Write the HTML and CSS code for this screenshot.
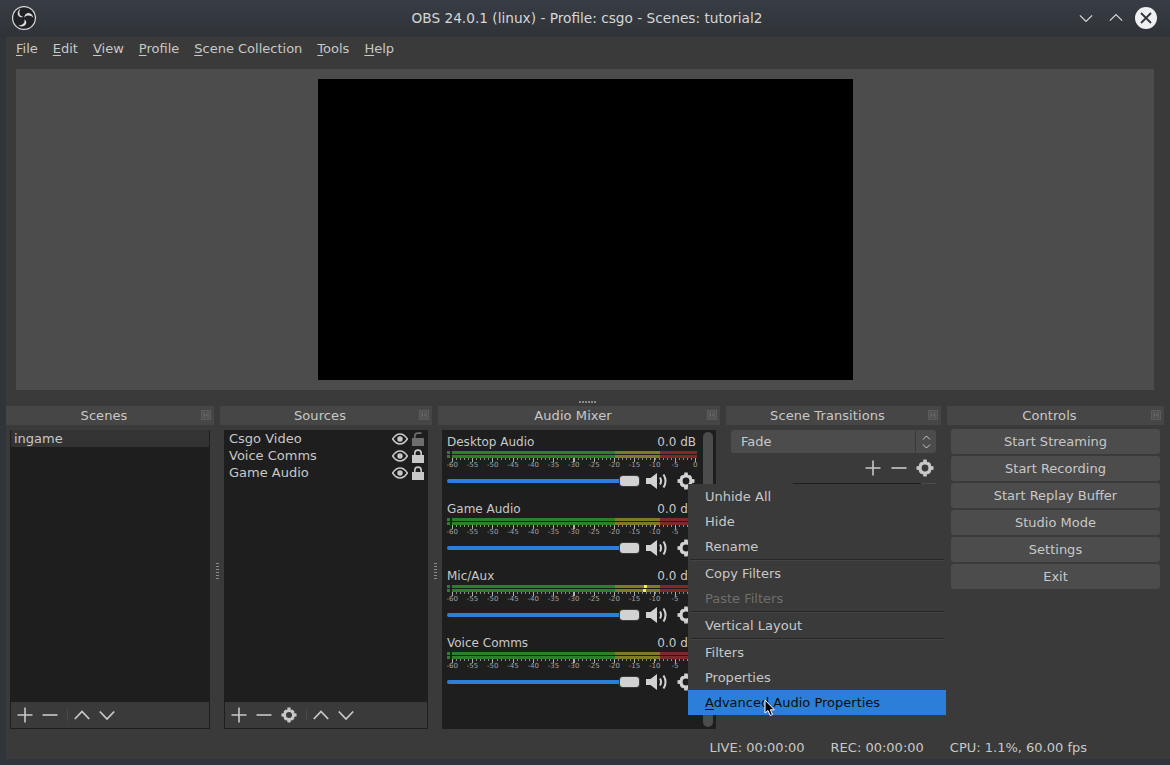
FILE: index.html
```html
<!DOCTYPE html>
<html lang="en">
<head>
  <meta charset="UTF-8" />
  <title>OBS 24.0.1 (linux) - Profile: csgo - Scenes: tutorial2</title>
  <link rel="stylesheet" href="styles.css">
</head>
<body>

  <svg class="defs" width="0" height="0">
    <symbol id="i-plus" viewBox="0 0 16 16"><path d="M8 0.5V15.5M0.5 8H15.5" stroke="currentColor" stroke-width="1.6" fill="none"/></symbol>
    <symbol id="i-minus" viewBox="0 0 16 16"><path d="M0.5 8H15.5" stroke="currentColor" stroke-width="1.6" fill="none"/></symbol>
    <symbol id="i-up" viewBox="0 0 16 16"><path d="M0.8 12L8 4.5L15.2 12" stroke="currentColor" stroke-width="1.8" fill="none"/></symbol>
    <symbol id="i-down" viewBox="0 0 16 16"><path d="M0.8 4.5L8 12L15.2 4.5" stroke="currentColor" stroke-width="1.8" fill="none"/></symbol>
    <symbol id="i-gear" viewBox="0 0 18 18">
      <circle cx="9" cy="9" r="5" stroke="currentColor" stroke-width="3.2" fill="none"/>
      <path d="M7.3 0.5H10.7L11 3.5H7ZM7.3 17.5H10.7L11 14.5H7ZM0.5 7.3V10.7L3.5 11V7ZM17.5 7.3V10.7L14.5 11V7ZM2.8 5.2L5.2 2.8L7 5L5 7ZM15.2 5.2L12.8 2.8L11 5L13 7ZM2.8 12.8L5.2 15.2L7 13L5 11ZM15.2 12.8L12.8 15.2L11 13L13 11Z" fill="currentColor"/>
    </symbol>
    <symbol id="i-eye" viewBox="0 0 16 12"><path d="M0.6 6C3 2.4 5.4 1 8 1S13 2.4 15.4 6C13 9.6 10.6 11 8 11S3 9.6 0.6 6Z" fill="none" stroke="currentColor" stroke-width="1.6"/><circle cx="8" cy="6" r="2.7" fill="currentColor"/></symbol>
    <symbol id="i-lock" viewBox="0 0 12 14"><path d="M2.8 7V4.2C2.8 2.3 4.2 1.1 6 1.1S9.2 2.3 9.2 4.2V7" fill="none" stroke="currentColor" stroke-width="1.6"/><rect y="6" width="12" height="8" fill="currentColor"/></symbol>
    <symbol id="i-open" viewBox="0 0 12 14"><path d="M2.8 6V4C2.8 2.2 4.2 1.1 6 1.1H9.5" fill="none" stroke="currentColor" stroke-width="1.6"/><rect y="6" width="12" height="8" fill="currentColor"/></symbol>
    <symbol id="i-speaker" viewBox="0 0 22 16">
      <path d="M0 5H4.5L11 0V16L4.5 11H0Z" fill="currentColor"/>
      <path d="M14 4.5C15.2 6.5 15.2 9.500 14 11.500M17.500 1.500C20 5.500 20 10.500 17.500 14.500" fill="none" stroke="currentColor" stroke-width="2"/>
    </symbol>
    <symbol id="i-float" viewBox="0 0 10 10">
      <rect x="0.500" y="0.500" width="9" height="9" fill="#505050" stroke="#6e6e6e" stroke-dasharray="1 1"/>
      <path d="M3 2.500V7.500M7 2.500V7.500M3 5H7" stroke="#7c7c7c" stroke-dasharray="1 1" fill="none"/>
    </symbol>
  </svg>

  <header class="titlebar">
    <svg class="obs-logo" width="26" height="26" viewBox="0 0 26 26">
      <circle cx="13" cy="13" r="12" fill="#dcdcdc"/>
      <circle cx="13" cy="13" r="10.800" fill="#202225"/>
      <path d="M9.500 3.800C7 5.200 6 8.300 7.300 10.600C8.400 12.400 10.600 12.800 12.100 11.400C10.300 11.600 8.900 10.500 8.500 8.700C8.200 6.900 8.500 5.200 9.500 3.800Z" fill="#dcdcdc"/>
      <path d="M22.300 12.500C21.800 9.600 18.900 7.600 16.200 8.200C14.200 8.700 13 10.900 13.700 12.800C14.200 11.200 15.700 10.300 17.500 10.500C19.300 10.700 21 11.300 22.300 12.500Z" fill="#dcdcdc"/>
      <path d="M7.300 20.400C9.800 22.200 13.200 21.700 14.800 19.300C15.900 17.500 15.200 15.200 13.300 14.400C13.900 16 13.500 17.800 12 18.900C10.500 19.900 8.900 20.400 7.300 20.400Z" fill="#dcdcdc"/>
    </svg>
    <span class="title-text">OBS 24.0.1 (linux) - Profile: csgo - Scenes: tutorial2</span>
    <div class="window-buttons">
      <svg class="win-chevron" viewBox="0 0 16 16"><path d="M1 5L8 12L15 5" fill="none" stroke="currentColor" stroke-width="1.400"/></svg>
      <svg class="win-chevron" viewBox="0 0 16 16"><path d="M1 11L8 4L15 11" fill="none" stroke="currentColor" stroke-width="1.400"/></svg>
      <span class="win-close">
        <svg width="12" height="12" viewBox="0 0 12 12"><path d="M1 1L11 11M11 1L1 11" stroke="#2f343a" stroke-width="1.800"/></svg>
      </span>
    </div>
  </header>

  <main class="main">
    <nav class="menubar">
      <span><u>F</u>ile</span>
      <span><u>E</u>dit</span>
      <span><u>V</u>iew</span>
      <span><u>P</u>rofile</span>
      <span><u>S</u>cene Collection</span>
      <span><u>T</u>ools</span>
      <span><u>H</u>elp</span>
    </nav>

    <section class="preview">
      <div class="preview-screen"></div>
    </section>

    <div class="splitter-h"><i></i></div>

    <div class="docks">
      <section class="dock">
        <h2 class="dock-title">Scenes<svg class="float-icon"><use href="#i-float"/></svg></h2>
        <div class="dock-body with-list">
          <div class="list">
            <div class="list-row selected">ingame</div>
          </div>
          <div class="toolbar">
            <svg class="tool"><use href="#i-plus"/></svg>
            <svg class="tool"><use href="#i-minus"/></svg>
            <span class="tool-sep"></span>
            <svg class="tool"><use href="#i-up"/></svg>
            <svg class="tool"><use href="#i-down"/></svg>
          </div>
        </div>
        <div class="splitter-v"></div>
      </section>

      <section class="dock">
        <h2 class="dock-title">Sources<svg class="float-icon"><use href="#i-float"/></svg></h2>
        <div class="dock-body with-list">
          <div class="list">
            <div class="list-row source">
              <span class="source-name">Csgo Video</span>
              <svg class="eye"><use href="#i-eye"/></svg>
              <svg class="lock dim"><use href="#i-open"/></svg>
            </div>
            <div class="list-row source">
              <span class="source-name">Voice Comms</span>
              <svg class="eye"><use href="#i-eye"/></svg>
              <svg class="lock"><use href="#i-lock"/></svg>
            </div>
            <div class="list-row source">
              <span class="source-name">Game Audio</span>
              <svg class="eye"><use href="#i-eye"/></svg>
              <svg class="lock"><use href="#i-lock"/></svg>
            </div>
          </div>
          <div class="toolbar">
            <svg class="tool"><use href="#i-plus"/></svg>
            <svg class="tool"><use href="#i-minus"/></svg>
            <svg class="tool"><use href="#i-gear"/></svg>
            <span class="tool-sep"></span>
            <svg class="tool"><use href="#i-up"/></svg>
            <svg class="tool"><use href="#i-down"/></svg>
          </div>
        </div>
        <div class="splitter-v"></div>
      </section>

      <section class="dock">
        <h2 class="dock-title">Audio Mixer<svg class="float-icon"><use href="#i-float"/></svg></h2>
        <div class="dock-body mixer">
          <div class="channels">

            <div class="channel">
              <div class="channel-head"><span>Desktop Audio</span><span>0.0 dB</span></div>
              <div class="meter"><div class="bar"></div><div class="bar"></div></div>
              <div class="ticks"></div>
              <div class="scale"><span>-60</span><span>-55</span><span>-50</span><span>-45</span><span>-40</span><span>-35</span><span>-30</span><span>-25</span><span>-20</span><span>-15</span><span>-10</span><span>-5</span><span>0</span></div>
              <div class="channel-controls">
                <div class="slider"><div class="slider-handle"></div></div>
                <svg class="speaker"><use href="#i-speaker"/></svg>
                <svg class="channel-gear"><use href="#i-gear"/></svg>
              </div>
            </div>

            <div class="channel">
              <div class="channel-head"><span>Game Audio</span><span>0.0 dB</span></div>
              <div class="meter"><div class="bar"></div><div class="bar"></div></div>
              <div class="ticks"></div>
              <div class="scale"><span>-60</span><span>-55</span><span>-50</span><span>-45</span><span>-40</span><span>-35</span><span>-30</span><span>-25</span><span>-20</span><span>-15</span><span>-10</span><span>-5</span><span>0</span></div>
              <div class="channel-controls">
                <div class="slider"><div class="slider-handle"></div></div>
                <svg class="speaker"><use href="#i-speaker"/></svg>
                <svg class="channel-gear"><use href="#i-gear"/></svg>
              </div>
            </div>

            <div class="channel">
              <div class="channel-head"><span>Mic/Aux</span><span>0.0 dB</span></div>
              <div class="meter">
                <div class="bar"><i class="peak peak-top"></i></div>
                <div class="bar"><i class="peak peak-bottom"></i></div>
              </div>
              <div class="ticks"></div>
              <div class="scale"><span>-60</span><span>-55</span><span>-50</span><span>-45</span><span>-40</span><span>-35</span><span>-30</span><span>-25</span><span>-20</span><span>-15</span><span>-10</span><span>-5</span><span>0</span></div>
              <div class="channel-controls">
                <div class="slider"><div class="slider-handle"></div></div>
                <svg class="speaker"><use href="#i-speaker"/></svg>
                <svg class="channel-gear"><use href="#i-gear"/></svg>
              </div>
            </div>

            <div class="channel">
              <div class="channel-head"><span>Voice Comms</span><span>0.0 dB</span></div>
              <div class="meter"><div class="bar"></div><div class="bar"></div></div>
              <div class="ticks"></div>
              <div class="scale"><span>-60</span><span>-55</span><span>-50</span><span>-45</span><span>-40</span><span>-35</span><span>-30</span><span>-25</span><span>-20</span><span>-15</span><span>-10</span><span>-5</span><span>0</span></div>
              <div class="channel-controls">
                <div class="slider"><div class="slider-handle"></div></div>
                <svg class="speaker"><use href="#i-speaker"/></svg>
                <svg class="channel-gear"><use href="#i-gear"/></svg>
              </div>
            </div>

          </div>
          <div class="scrollbar"></div>
        </div>
      </section>

      <section class="dock">
        <h2 class="dock-title">Scene Transitions<svg class="float-icon"><use href="#i-float"/></svg></h2>
        <div class="dock-body transitions">
          <div class="combo">
            <span class="combo-value">Fade</span>
            <span class="combo-arrows">
              <svg width="9" height="16" viewBox="0 0 9 16"><path d="M1 5.500L4.500 2L8 5.500M1 10.500L4.500 14L8 10.500" fill="none" stroke="#c8c8c8"/></svg>
            </span>
          </div>
          <div class="transition-tools">
            <svg class="tool"><use href="#i-plus"/></svg>
            <svg class="tool"><use href="#i-minus"/></svg>
            <svg class="tool"><use href="#i-gear"/></svg>
          </div>
          <div class="duration"><span class="duration-field"></span><span class="duration-spin"></span></div>
        </div>
      </section>

      <section class="dock">
        <h2 class="dock-title">Controls<svg class="float-icon"><use href="#i-float"/></svg></h2>
        <div class="dock-body controls">
          <button class="btn">Start Streaming</button>
          <button class="btn">Start Recording</button>
          <button class="btn">Start Replay Buffer</button>
          <button class="btn">Studio Mode</button>
          <button class="btn">Settings</button>
          <button class="btn">Exit</button>
        </div>
      </section>
    </div>

    <footer class="statusbar">
      <span>LIVE: 00:00:00</span>
      <span>REC: 00:00:00</span>
      <span>CPU: 1.1%, 60.00 fps</span>
    </footer>
  </main>

  <!-- context menu, floats over the mixer -->
  <div class="context-menu">
    <div class="menu-item">Unhide All</div>
    <div class="menu-item">Hide</div>
    <div class="menu-item">Rename</div>
    <div class="menu-sep"></div>
    <div class="menu-item">Copy Filters</div>
    <div class="menu-item disabled">Paste Filters</div>
    <div class="menu-sep"></div>
    <div class="menu-item">Vertical Layout</div>
    <div class="menu-sep"></div>
    <div class="menu-item">Filters</div>
    <div class="menu-item">Properties</div>
    <div class="menu-item active"><u>A</u>dvanced Audio Properties</div>
  </div>

  <svg class="cursor" width="12" height="18" viewBox="0 0 12 18">
    <path d="M1 1V14L4 11.500L6.200 16.500L8.500 15.500L6.300 10.800H10.300Z" fill="#000" stroke="#fff" stroke-width="1"/>
  </svg>

</body>
</html>
```

FILE: styles.css
```css
* {
  box-sizing: border-box;
}

html, body {
  margin: 0;
  height: 765px;
  overflow: hidden;
}

body {
  position: relative;
  font-family: "DejaVu Sans", sans-serif;
  font-size: 13px;
  color: #c8c8c8;
  background: #2f353a;
}

.defs {
  position: absolute;
}

u {
  text-underline-offset: 2px;
}

/* title bar */
.titlebar {
  display: flex;
  align-items: center;
  height: 37px;
  padding: 0 13px 1px 11px;
  background: linear-gradient(#383d45, #2f3338);
}

.obs-logo {
  flex: none;
}

.title-text {
  flex: 1;
  text-align: center;
  font-size: 13.7px;
  color: #d6d6d6;
  padding-left: 58px;
}

.window-buttons {
  display: flex;
  align-items: center;
  gap: 16px;
}

.win-chevron {
  width: 14px;
  height: 14px;
  color: #d8d8d8;
}

.win-close {
  display: flex;
  align-items: center;
  justify-content: center;
  width: 22px;
  height: 22px;
  margin-left: -4px;
  border-radius: 50%;
  background: #eff0f1;
}

/* main window */
.main {
  margin-left: 6px;
  height: 722px;
  background: #3a3a3a;
}

.menubar {
  display: flex;
  align-items: center;
  gap: 15px;
  height: 23px;
  padding-left: 10px;
}

.preview {
  display: flex;
  justify-content: center;
  align-items: center;
  height: 321px;
  margin: 9px 16px 0 10px;
  background: #4c4c4c;
}

.preview-screen {
  width: 535px;
  height: 301px;
  background: #000;
}

.splitter-h {
  display: flex;
  justify-content: center;
  height: 16px;
  padding-top: 11px;
}

.splitter-h i {
  width: 18px;
  height: 2px;
  background: repeating-linear-gradient(90deg, #8a8a8a 0 2px, transparent 2px 3px);
}

/* docks */
.docks {
  display: grid;
  grid-template-columns: 208px 212px 282px 215px 217px;
  gap: 6px;
  height: 323px;
}

.dock {
  position: relative;
  display: flex;
  flex-direction: column;
  min-width: 0;
}

.dock-title {
  position: relative;
  flex: none;
  height: 19px;
  margin: 0;
  padding-right: 12px;
  font-size: 13px;
  font-weight: normal;
  letter-spacing: 0.08px;
  line-height: 19px;
  text-align: center;
  background: #464646;
}

.float-icon {
  position: absolute;
  top: 4px;
  right: 3px;
  width: 10px;
  height: 10px;
}

.dock-body {
  flex: 1;
  min-height: 0;
  margin: 5px 4px 0;
}

.with-list {
  display: flex;
  flex-direction: column;
  border: 1px solid #1e1e1e;
}

.list {
  flex: 1;
  margin-top: -1px;
  background: #1e1e1e;
}

.list-row {
  height: 17px;
  line-height: 17px;
  padding-left: 3px;
}

.list-row.selected {
  background: #333;
}

.list-row.source {
  display: flex;
  align-items: center;
  padding: 0 3px 0 4px;
}

.source-name {
  flex: 1;
}

.eye {
  width: 16px;
  height: 12px;
  color: #c8c8c8;
}

.lock {
  width: 12px;
  height: 14px;
  margin-left: 4px;
  color: #c8c8c8;
}

.lock.dim {
  color: #6e6e6e;
}

.toolbar {
  display: flex;
  align-items: center;
  flex: none;
  height: 26px;
  padding-left: 6px;
  color: #c8c8c8;
}

.tool {
  width: 16px;
  height: 16px;
  margin-right: 9px;
  flex: none;
}

.tool-sep {
  width: 1px;
  height: 12px;
  margin: 0 6px 0 0;
  background: #4a4a4a;
}

.splitter-v {
  position: absolute;
  top: 157px;
  right: -5px;
  width: 3px;
  height: 18px;
  background: repeating-linear-gradient(#8a8a8a 0 1px, transparent 1px 3px);
}

/* audio mixer */
.mixer {
  display: flex;
  background: #1e1e1e;
  padding-left: 5px;
  overflow: hidden;
}

.channels {
  width: 250px;
  flex: none;
}

.channel {
  height: 67px;
  padding-top: 5px;
}

.channel-head {
  display: flex;
  justify-content: space-between;
  height: 15px;
  padding-right: 1px;
  font-size: 12px;
  line-height: 15px;
  margin-bottom: 1px;
}

.meter {
  display: flex;
  flex-direction: column;
  gap: 1px;
}

.bar {
  position: relative;
  height: 3px;
  background: linear-gradient(90deg,
    #2a8228 0 3px, transparent 3px 5px,
    #2a8228 5px 168px,
    #7f7a25 168px 213px,
    #7f2a2a 213px 250px);
}

.peak {
  position: absolute;
  top: 0;
  width: 3px;
  height: 3px;
  background: #f4f43c;
}

.peak-top {
  left: 197px;
}

.peak-bottom {
  left: 196px;
}

.ticks {
  height: 4px;
  margin-left: 5px;
  width: 244px;
  background:
    repeating-linear-gradient(90deg, #b0b0b0 0 1px, transparent 1px 20.25px) 0 0 / 100% 4px no-repeat,
    repeating-linear-gradient(90deg, #8c8c8c 0 1px, transparent 1px 4.05px) 0 0 / 100% 2px no-repeat;
}

.scale {
  display: grid;
  grid-template-columns: repeat(13, 20.25px);
  height: 6px;
  margin-left: -5px;
  font-size: 7px;
  line-height: 6px;
  text-align: center;
  color: #a0a0a0;
}

.channel-controls {
  display: flex;
  align-items: center;
  height: 20px;
  margin-top: 3px;
  color: #d2d2d2;
}

.slider {
  position: relative;
  flex: none;
  width: 192px;
  height: 4px;
  border-radius: 2px;
  background: #2b7fd8;
}

.slider-handle {
  position: absolute;
  right: 0;
  top: -3px;
  width: 19px;
  height: 10px;
  border-radius: 3px;
  background: #d2d2d2;
  box-shadow: 0 0 0 1px #3a3a3a;
}

.speaker {
  width: 22px;
  height: 16px;
  margin-left: 7px;
  flex: none;
}

.channel-gear {
  width: 18px;
  height: 18px;
  margin-left: 9px;
  flex: none;
}

.scrollbar {
  width: 10px;
  margin: 2px 0 2px 6px;
  border-radius: 5px;
  background: #4c4c4c;
}

/* transitions */
.transitions {
  margin-left: 5px;
  margin-right: 5px;
}

.combo {
  display: flex;
  height: 23px;
  border-radius: 3px;
  background: #4c4c4c;
  line-height: 23px;
}

.combo-value {
  flex: 1;
  padding-left: 10px;
}

.combo-arrows {
  display: flex;
  align-items: center;
  justify-content: center;
  width: 21px;
  border-left: 1px solid #3a3a3a;
}

.transition-tools {
  display: flex;
  justify-content: flex-end;
  align-items: center;
  height: 30px;
  color: #c8c8c8;
}

.transition-tools .tool {
  margin: 0 2px 0 8px;
}

.transition-tools .tool:last-child {
  width: 18px;
  height: 18px;
  margin: 0 2px 0 7px;
}

.duration {
  display: flex;
  height: 4px;
  padding-left: 62px;
}

.duration-field {
  flex: 1;
  border-top: 1px solid #1e1e1e;
}

.duration-spin {
  width: 15px;
  background: #4c4c4c;
}

/* controls */
.controls {
  display: flex;
  flex-direction: column;
  gap: 2px;
  margin-top: 4px;
}

.btn {
  height: 25px;
  padding: 0;
  border: 0;
  border-radius: 3px;
  font: inherit;
  color: #c8c8c8;
  background: #4c4c4c;
}

/* status bar */
.statusbar {
  display: flex;
  justify-content: flex-end;
  align-items: center;
  gap: 26px;
  height: 30px;
  padding: 12px 83px 5px 0;
}

/* context menu */
.context-menu {
  position: absolute;
  left: 688px;
  top: 484px;
  width: 258px;
  background: #3a3a3a;
}

.menu-item {
  height: 25px;
  line-height: 25px;
  padding-left: 17px;
}

.menu-item.disabled {
  color: #6e6e6e;
}

.menu-item.active {
  color: #0e0e0e;
  background: #2b7fd8;
}

.menu-sep {
  height: 2px;
  margin: 0 2px;
  background: #262626;
  border-bottom: 1px solid #444;
}

.cursor {
  position: absolute;
  left: 764px;
  top: 699px;
}
```
